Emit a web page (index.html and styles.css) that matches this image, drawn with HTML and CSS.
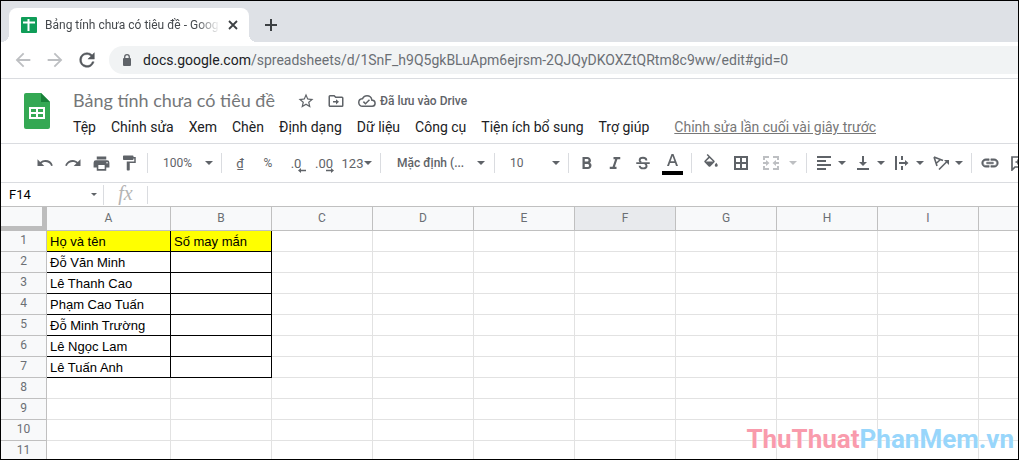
FILE: index.html
```html
<!DOCTYPE html>
<html lang="vi">
<head>
<meta charset="utf-8">
<title>Bảng tính chưa có tiêu đề - Google Trang tính</title>
<link rel="stylesheet" href="styles.css">
</head>
<body>
<div class="browser">
  <header class="tabstrip">
    <div class="tab">
      <svg class="favicon" viewBox="0 0 16 16"><rect width="16" height="16" rx="1" fill="#0f9d58"/><path d="M2 5.500h12M7.500 2v12" stroke="#fff" stroke-width="2"/></svg>
      <span class="tab-title">Bảng tính chưa có tiêu đề - Goog</span>
      <button class="tab-close" aria-label="Đóng thẻ"><svg width="10" height="10" viewBox="0 0 10 10"><path d="M1 1l8 8M9 1L1 9" stroke="#3c4043" stroke-width="1.800"/></svg></button>
    </div>
    <button class="new-tab" aria-label="Thẻ mới"><svg width="12" height="12" viewBox="0 0 12 12"><path d="M6 0v12M0 6h12" stroke="#3c4043" stroke-width="2"/></svg></button>
  </header>

  <div class="navbar">
    <button class="nav" aria-label="Quay lại"><svg width="22" height="22" viewBox="0 0 24 24" fill="#bdbfc2"><path d="M20 11H7.830l5.590-5.590L12 4l-8 8 8 8 1.410-1.410L7.830 13H20v-2z"/></svg></button>
    <button class="nav" aria-label="Tiến"><svg width="22" height="22" viewBox="0 0 24 24" fill="#bdbfc2"><path d="M12 4l-1.410 1.410L16.170 11H4v2h12.170l-5.580 5.590L12 20l8-8z"/></svg></button>
    <button class="nav" aria-label="Tải lại"><svg width="22" height="22" viewBox="0 0 24 24" fill="#54585d"><path d="M17.650 6.350A7.960 7.960 0 0 0 12 4a8 8 0 1 0 7.730 10h-2.080A6 6 0 1 1 12 6c1.660 0 3.140.69 4.220 1.780L13 11h7V4l-2.350 2.350z" stroke="#54585d" stroke-width=".5"/></svg></button>
    <div class="omnibox">
      <svg width="10" height="13" viewBox="0 0 10 13"><rect x="1" y="4" width="8" height="8" rx="1" fill="#5f6368"/><path d="M2.700 5V3a2.300 2.300 0 0 1 4.600 0v2" fill="none" stroke="#5f6368" stroke-width="1.300"/></svg>
      <div class="url" role="textbox" contenteditable="true" spellcheck="false" aria-label="Địa chỉ"><span class="host">docs.google.com</span>/spreadsheets/d/1SnF_h9Q5gkBLuApm6ejrsm-2QJQyDKOXZtQRtm8c9ww/edit#gid=0</div>
    </div>
  </div>

  <div class="doc-head">
    <svg class="logo" width="26" height="36" viewBox="0 0 26 36"><path d="M2 0h15l9 9v25a2 2 0 0 1-2 2H2a2 2 0 0 1-2-2V2a2 2 0 0 1 2-2z" fill="#34a853"/><path d="M17 0l9 9h-9z" fill="#188038"/><path d="M5 14h16v12H5z" fill="#fff"/><path d="M7 16h5v3H7zM14 16h5v3h-5zM7 21h5v3H7zM14 21h5v3h-5z" fill="#34a853"/></svg>
    <div class="doc-info">
      <div class="title-row">
        <input class="doc-title" aria-label="Tên tài liệu" value="Bảng tính chưa có tiêu đề">
        <button class="plain" aria-label="Gắn dấu sao"><svg width="18" height="18" viewBox="0 0 24 24" fill="#5f6368"><path d="M22 9.240l-7.190-.62L12 2 9.190 8.630 2 9.240l5.460 4.730L5.820 21 12 17.270 18.180 21l-1.630-7.030L22 9.240zM12 15.400l-3.760 2.270 1-4.280-3.320-2.880 4.380-.38L12 6.100l1.710 4.040 4.380.38-3.320 2.880 1 4.280L12 15.400z"/></svg></button>
        <button class="plain" aria-label="Di chuyển"><svg width="18" height="18" viewBox="0 0 24 24" fill="#5f6368"><path d="M20 6h-8l-2-2H4a2 2 0 0 0-2 2v12c0 1.100.9 2 2 2h16a2 2 0 0 0 2-2V8a2 2 0 0 0-2-2zm0 12H4V6h5.170l2 2H20v10zM12 9.500v2.500H8v2h4v2.500l4-3.500z"/></svg></button>
        <button class="plain saved"><svg width="18" height="18" viewBox="0 0 24 24" fill="#5f6368"><path d="M19.350 10.040A7.490 7.490 0 0 0 12 4a7.500 7.500 0 0 0-6.650 4.040A5.994 5.994 0 0 0 0 14a6 6 0 0 0 6 6h13a5 5 0 0 0 .35-9.960zM19 18H6a4 4 0 0 1-.44-7.970l1.070-.110.5-.95A5.469 5.469 0 0 1 12 6a5.500 5.500 0 0 1 5.390 4.430l.3 1.500 1.530.110A3 3 0 0 1 19 18zm-9-3.820l-2.090-2.090L6.500 13.500 10 17l6.010-6.010-1.410-1.410z"/></svg><span>Đã lưu vào Drive</span></button>
      </div>
      <nav class="menu">
        <button>Tệp</button><button>Chỉnh sửa</button><button>Xem</button><button>Chèn</button><button>Định dạng</button><button>Dữ liệu</button><button>Công cụ</button><button>Tiện ích bổ sung</button><button>Trợ giúp</button>
        <a href="#history">Chỉnh sửa lần cuối vài giây trước</a>
      </nav>
    </div>
  </div>

  <div class="toolbar">
    <button class="tool" aria-label="Hoàn tác"><svg width="18" height="18" viewBox="0 0 24 24"><path d="M12.500 8c-2.650 0-5.050.990-6.900 2.600L2 7v9h9l-3.620-3.620A8.020 8.020 0 0 1 20.100 16l2.370-.780A10.500 10.500 0 0 0 12.500 8z"/></svg></button>
    <button class="tool" aria-label="Làm lại"><svg width="18" height="18" viewBox="0 0 24 24"><path d="M18.400 10.600A10.500 10.500 0 0 0 1.540 15.220L3.900 16a8.020 8.020 0 0 1 12.720-3.620L13 16h9V7l-3.600 3.600z"/></svg></button>
    <button class="tool" aria-label="In"><svg width="19" height="19" viewBox="0 0 24 24"><path d="M19 8H5a3 3 0 0 0-3 3v6h4v4h12v-4h4v-6a3 3 0 0 0-3-3zm-3 11H8v-5h8v5zm3-7a1 1 0 1 1 0-2 1 1 0 0 1 0 2zM18 3H6v4h12V3z"/></svg></button>
    <button class="tool" aria-label="Sao chép định dạng"><svg width="18" height="18" viewBox="0 0 24 24"><path d="M18 4V3a1 1 0 0 0-1-1H5a1 1 0 0 0-1 1v4a1 1 0 0 0 1 1h12a1 1 0 0 0 1-1V6h1v4H9v11a1 1 0 0 0 1 1h2a1 1 0 0 0 1-1v-9h8V4h-3z"/></svg></button>
    <span class="sep"></span>
    <label class="pick"><select aria-label="Thu phóng"><option>100%</option></select><svg class="caret" viewBox="0 0 8 4"><path d="M0 0h8L4 4z"/></svg></label>
    <span class="sep"></span>
    <button class="tool">₫</button>
    <button class="tool small">%</button>
    <button class="tool decimal" aria-label="Giảm số thập phân"><span>.0</span><svg width="8" height="5" viewBox="0 0 8 5"><path d="M3 0v1.700h5v1.600H3V5L0 2.500z"/></svg></button>
    <button class="tool decimal" aria-label="Tăng số thập phân"><span>.00</span><svg width="8" height="5" viewBox="0 0 8 5"><path d="M5 0v1.700H0v1.600h5V5l3-2.500z"/></svg></button>
    <button class="tool number">123<svg class="caret" viewBox="0 0 8 4"><path d="M0 0h8L4 4z"/></svg></button>
    <span class="sep"></span>
    <label class="pick font"><select aria-label="Phông chữ"><option>Mặc định (...</option></select><svg class="caret" viewBox="0 0 8 4"><path d="M0 0h8L4 4z"/></svg></label>
    <span class="sep"></span>
    <label class="pick"><select aria-label="Cỡ chữ"><option>10</option></select><svg class="caret" viewBox="0 0 8 4"><path d="M0 0h8L4 4z"/></svg></label>
    <span class="sep"></span>
    <button class="tool" aria-label="Đậm"><svg width="18" height="18" viewBox="0 0 24 24"><path d="M15.600 11.800c1-.7 1.650-1.800 1.650-2.800C17.250 6.200 15 4 12.500 4H6v16h7.300c2.600 0 4.700-2.100 4.700-4.600 0-1.600-.9-2.900-2.400-3.600zM9 6.500h3.300a1.700 1.700 0 0 1 0 3.500H9V6.500zm3.800 10.900H9v-4h3.800a2 2 0 0 1 0 4z"/></svg></button>
    <button class="tool" aria-label="Nghiêng"><svg width="18" height="18" viewBox="0 0 24 24"><path d="M10 4v3h2.210l-3.420 10H5v3h9v-3h-2.210l3.420-10H19V4z"/></svg></button>
    <button class="tool" aria-label="Gạch ngang"><svg width="18" height="18" viewBox="0 0 24 24"><path d="M3 11h18v2.300H3z"/><path d="M16.500 8.500C16.500 6 14.500 5 12 5S7.500 6.200 7.500 8.200c0 1.300.7 2.200 2.200 2.800M14.500 13.300c1.700.6 2.300 1.400 2.300 2.600 0 2-2 3.200-4.600 3.200-2.700 0-4.700-1.200-4.700-3.600" fill="none" stroke="#5f6368" stroke-width="2.500"/></svg></button>
    <button class="tool wide" aria-label="Màu văn bản"><svg width="21" height="26" viewBox="0 0 21 26"><path d="M9.500 4h2L16 16h-2l-1-3H8l-1 3H5zm1 2L8.600 11.300h3.800z"/><path d="M0 21h21v4H0z" fill="#000"/></svg></button>
    <span class="sep"></span>
    <button class="tool wide" aria-label="Màu nền"><svg class="fill-icon" width="18" height="18" viewBox="0 0 24 24"><path d="M16.560 8.940L7.620 0 6.210 1.410l2.380 2.380-5.150 5.150a1.490 1.490 0 0 0 0 2.120l5.500 5.500a1.500 1.500 0 0 0 2.120 0l5.500-5.500c.59-.58.59-1.530 0-2.120zM5.210 10L10 5.210 14.790 10H5.210zM19 11.500s-2 2.170-2 3.500a2 2 0 0 0 4 0c0-1.330-2-3.500-2-3.500z"/></svg></button>
    <button class="tool wide" aria-label="Đường viền"><svg width="18" height="18" viewBox="0 0 18 18"><path d="M3 3h12v12H3zM9 3v12M3 9h12" fill="none" stroke="#5f6368" stroke-width="2"/></svg></button>
    <button class="tool merge" disabled aria-label="Hợp nhất ô"><svg width="18" height="18" viewBox="0 0 18 18"><path d="M2 6V3h5M11 3h5v3M2 12v3h5M11 15h5v-3" fill="none" stroke="#bdbfc2" stroke-width="2"/><path d="M1 8h3V6l3.500 3L4 12v-2H1zM17 8h-3V6l-3.500 3 3.500 3v-2h3z"/></svg><svg class="caret" viewBox="0 0 8 4"><path d="M0 0h8L4 4z"/></svg></button>
    <span class="sep"></span>
    <button class="tool menu-tool" aria-label="Căn ngang"><svg width="18" height="18" viewBox="0 0 18 18"><path d="M2 2h14v2H2zM2 6h9v2H2zM2 10h14v2H2zM2 14h9v2H2z"/></svg><svg class="caret" viewBox="0 0 8 4"><path d="M0 0h8L4 4z"/></svg></button>
    <button class="tool menu-tool" aria-label="Căn dọc"><svg width="18" height="18" viewBox="0 0 18 18"><path d="M3 14h12v2H3zM8 2h2v6h3l-4 4-4-4h3z"/></svg><svg class="caret" viewBox="0 0 8 4"><path d="M0 0h8L4 4z"/></svg></button>
    <button class="tool menu-tool" aria-label="Xuống dòng"><svg width="18" height="18" viewBox="0 0 18 18"><path d="M2 2h2v14H2zM8 2h2v4H8zM8 12h2v4H8zM6 8h6V6l3.500 3-3.500 3v-2H6z"/></svg><svg class="caret" viewBox="0 0 8 4"><path d="M0 0h8L4 4z"/></svg></button>
    <button class="tool menu-tool" aria-label="Xoay văn bản"><svg width="18" height="18" viewBox="0 0 18 18"><path d="M2 3l9 3.500M2 3l3 9M8.500 5.500L4 9.500M7 15.500l8-8" fill="none" stroke="#5f6368" stroke-width="1.600"/><path d="M12 6h5v5z"/></svg><svg class="caret" viewBox="0 0 8 4"><path d="M0 0h8L4 4z"/></svg></button>
    <span class="sep"></span>
    <button class="tool" aria-label="Chèn liên kết"><svg width="20" height="20" viewBox="0 0 24 24"><path d="M3.900 12c0-1.710 1.390-3.100 3.100-3.100h4V7H7a5 5 0 0 0 0 10h4v-1.900H7A3.100 3.100 0 0 1 3.900 12zM8 13h8v-2H8v2zm9-6h-4v1.900h4a3.100 3.100 0 0 1 0 6.200h-4V17h4a5 5 0 0 0 0-10z" stroke="#5f6368" stroke-width=".6"/></svg></button>
    <button class="tool" aria-label="Chèn nhận xét"><svg width="16" height="16" viewBox="0 0 16 16"><path d="M2 15V2h12v10H5zM8 4.500v5M5.500 7h5" fill="none" stroke="#5f6368" stroke-width="1.700"/></svg></button>
  </div>

  <div class="formula">
    <div class="namebox"><input aria-label="Hộp tên" value="F14"><svg class="caret" viewBox="0 0 8 4"><path d="M0 0h8L4 4z"/></svg></div>
    <span class="fx">fx</span>
    <input class="formula-input" aria-label="Công thức">
  </div>

  <main class="sheet">
    <table>
      <colgroup><col class="c-num"><col class="c-name"><col><col><col><col><col><col><col><col><col></colgroup>
      <thead><tr><th class="corner"></th><th>A</th><th>B</th><th>C</th><th>D</th><th>E</th><th class="active">F</th><th>G</th><th>H</th><th>I</th><th></th></tr></thead>
      <tbody>
        <tr class="data title"><th>1</th><td>Họ và tên</td><td>Số may mắn</td><td></td><td></td><td></td><td></td><td></td><td></td><td></td><td></td></tr>
        <tr class="data"><th>2</th><td>Đỗ Văn Minh</td><td></td><td></td><td></td><td></td><td></td><td></td><td></td><td></td><td></td></tr>
        <tr class="data"><th>3</th><td>Lê Thanh Cao</td><td></td><td></td><td></td><td></td><td></td><td></td><td></td><td></td><td></td></tr>
        <tr class="data"><th>4</th><td>Phạm Cao Tuấn</td><td></td><td></td><td></td><td></td><td></td><td></td><td></td><td></td><td></td></tr>
        <tr class="data"><th>5</th><td>Đỗ Minh Trường</td><td></td><td></td><td></td><td></td><td></td><td></td><td></td><td></td><td></td></tr>
        <tr class="data"><th>6</th><td>Lê Ngọc Lam</td><td></td><td></td><td></td><td></td><td></td><td></td><td></td><td></td><td></td></tr>
        <tr class="data"><th>7</th><td>Lê Tuấn Anh</td><td></td><td></td><td></td><td></td><td></td><td></td><td></td><td></td><td></td></tr>
        <tr><th>8</th><td></td><td></td><td></td><td></td><td></td><td></td><td></td><td></td><td></td><td></td></tr>
        <tr><th>9</th><td></td><td></td><td></td><td></td><td></td><td></td><td></td><td></td><td></td><td></td></tr>
        <tr><th>10</th><td></td><td></td><td></td><td></td><td></td><td></td><td></td><td></td><td></td><td></td></tr>
        <tr><th>11</th><td></td><td></td><td></td><td></td><td></td><td></td><td></td><td></td><td></td><td></td></tr>
      </tbody>
    </table>
    <div class="watermark"><span class="red">ThuThuat</span><span class="blue">PhanMem.vn</span></div>
  </main>
</div>
</body>
</html>
```
FILE: styles.css
```css
* { box-sizing: border-box; }
body { margin: 0; font-family: Roboto, "Liberation Sans", sans-serif; color: #202124; background: #fff; }
button { border: 0; padding: 0; background: none; font: inherit; color: inherit; display: flex; align-items: center; justify-content: center; white-space: nowrap; }
input, select { font: inherit; color: inherit; border: 0; padding: 0; background: none; outline: 0; min-width: 0; }
svg { flex: none; display: block; }

.browser { display: flex; flex-direction: column; height: 100vh; border: 1px solid #000; overflow: hidden; }
.browser > * { flex: none; }

.tabstrip { display: flex; align-items: flex-end; height: 41px; padding-left: 8px; background: #dee1e6; }
.tab { position: relative; display: flex; align-items: center; gap: 8px; width: 240px; height: 34px; padding: 0 11px 0 12px; background: #fff; border-radius: 8px 8px 0 0; }
.tab::before, .tab::after { content: ""; position: absolute; bottom: 0; width: 8px; height: 8px; }
.tab::before { right: 100%; background: radial-gradient(circle at 0 0, #dee1e6 8px, #fff 8px); }
.tab::after { left: 100%; background: radial-gradient(circle at 100% 0, #dee1e6 8px, #fff 8px); }
.favicon { width: 16px; height: 16px; }
.tab-title { flex: 1; white-space: nowrap; font: 12px/20px Roboto, sans-serif; color: #45494d; -webkit-mask-image: linear-gradient(to left, transparent, #000 24px); mask-image: linear-gradient(to left, transparent, #000 24px); }
.tab-close { width: 10px; height: 16px; }
.new-tab { width: 28px; height: 34px; margin-left: 8px; }

.navbar { display: flex; align-items: center; height: 37px; padding: 0 8px 0 6px; border-bottom: 1px solid #dadce0; }
.nav { width: 32px; height: 28px; }
.omnibox { flex: 1; display: flex; align-items: center; gap: 11px; height: 28px; margin-left: 6px; padding-left: 13px; border-radius: 14px 0 0 14px; background: #f1f3f4; margin-right: -8px; }
.url { font: 14px/20px Roboto, sans-serif; color: #6b6f74; white-space: nowrap; outline: 0; }
.host { color: #202124; }

.doc-head { display: flex; gap: 23px; height: 65px; padding: 14px 23px 0; border-bottom: 1px solid #dadce0; }
.doc-info { flex: 1; min-width: 0; margin-top: -4px; }
.title-row { display: flex; align-items: center; gap: 12px; height: 24px; }
.doc-title { width: 212px; height: 24px; padding-bottom: 2px; font: 18px/22px Lato, sans-serif; color: #757779; }
.plain { height: 24px; }
.saved { gap: 4px; font-size: 12px; color: #5f6368; font-weight: 500; margin-left: 1px; }
.menu { display: flex; align-items: center; gap: 15px; height: 28px; font-size: 14px; white-space: nowrap; }
.menu a { margin-left: 10px; color: #777; }

.toolbar { display: flex; align-items: center; height: 39px; padding-left: 30px; border-bottom: 1px solid #dadce0; color: #5f6368; fill: #5f6368; font-size: 13px; overflow: hidden; }
.toolbar > * { flex: none; }
.tool { width: 28px; height: 26px; }
.wide { width: 30px; }
.small { font-size: 12px; }
.sep { width: 1px; height: 20px; margin: 0 4px; background: #dadce0; }
.caret { width: 8px; height: 4px; fill: #5f6368; }
.pick { display: grid; grid-template-columns: 1fr; align-items: center; width: 65px; height: 26px; }
.pick > * { grid-area: 1 / 1; }
.pick select { appearance: none; width: 100%; height: 26px; padding-left: 11px; font-size: 12px; }
.pick .caret { justify-self: end; margin-right: 4px; pointer-events: none; }
.font { width: 105px; }
.font select { padding-left: 12px; font-weight: 500; }
.font .caret { margin-right: 5px; }
.decimal { position: relative; }
.decimal svg { position: absolute; right: 4px; bottom: 3px; }
.number { width: 38px; gap: 1px; }
.merge { width: 46px; gap: 9px; fill: #bdbfc2; }
.merge .caret { fill: #bdbfc2; }
.menu-tool { width: 39px; gap: 5px; }

.formula { display: flex; align-items: center; height: 24px; border-bottom: 1px solid #c0c0c0; }
.namebox { display: flex; align-items: center; width: 103px; height: 20px; padding: 0 6px 0 8px; border-right: 1px solid #dadce0; font-size: 13px; color: #000; }
.namebox input { flex: 1; }
.namebox .caret { width: 6px; height: 3px; }
.fx { width: 43px; text-align: center; font: italic 20px/24px "Liberation Serif", serif; padding-bottom: 4px; color: #b4b4b4; }
.formula-input { flex: 1; height: 18px; border-left: 1px solid #dadce0; padding-left: 6px; font-size: 13px; }

.sheet { position: relative; flex: 1 1 0 !important; min-height: 0; overflow: hidden; }
table { width: 1079px; table-layout: fixed; border-collapse: separate; border-spacing: 0; }
col { width: 101px; }
.c-num { width: 46px; }
.c-name { width: 124px; }
th, td { height: 21px; padding: 0; border: solid #e2e2e2; border-width: 0 1px 1px 0; white-space: nowrap; line-height: 20px; }
th { background: #f8f9fa; border-color: #c0c0c0; color: #6b6f74; font-size: 12px; font-weight: 400; text-align: center; }
tbody th { padding-bottom: 1px; line-height: 19px; }
thead th { height: 24px; line-height: 23px; }
.corner { border-width: 0 5px 5px 0; border-color: #bdbdbd; line-height: 19px; }
.active { background: #e8eaed; }
td { padding: 1px 0 0 3px; font: 13px/19px "Liberation Sans", Arial, sans-serif; color: #000; }
.data td:nth-child(2), .data td:nth-child(3) { border-color: #000; }
.title td:nth-child(2), .title td:nth-child(3) { background: #ff0; }
.watermark { position: absolute; right: 4px; bottom: 4px; font: bold 26px/32px Roboto, sans-serif; white-space: nowrap; text-shadow: 0 0 2px #fff; }
.red { color: #f99bac; }
.blue { color: #98d6fb; }
```
